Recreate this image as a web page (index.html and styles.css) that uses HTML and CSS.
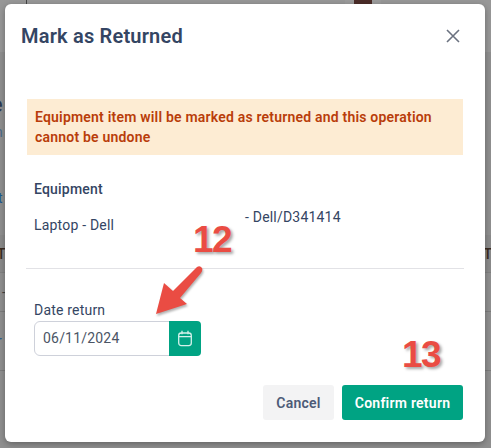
FILE: index.html
```html
<!DOCTYPE html>
<html lang="en">
<head>
    <meta charset="UTF-8">
    <meta name="viewport" content="width=device-width, initial-scale=1.0">
    <title>Mark as Returned</title>
    <link rel="stylesheet" href="styles.css">
</head>
<body>
    <!-- Page behind the dialog, only the edges show -->
    <div class="page">
        <div class="topbar">
            <span class="topbar-tick"></span>
            <span class="avatar"></span>
        </div>
        <div class="summary">
            <span class="summary-title">e</span>
            <span class="summary-sub">n</span>
            <span class="summary-link">t</span>
        </div>
        <div class="table-head">
            <span class="cell-left">T</span>
            <span class="cell-right">ST</span>
        </div>
        <div class="table-row row-one"><span class="cell-left dash">-</span></div>
        <div class="table-row row-two"><span class="cell-left blue">r</span></div>
    </div>

    <div class="modal">
        <div class="modal-header">
            <h1 class="modal-title">Mark as Returned</h1>
            <button class="close-btn" aria-label="Close">
                <svg width="14" height="14" viewBox="0 0 14 14"><path d="M1 1l12 12M13 1L1 13" stroke="#6b7280" stroke-width="1.6" fill="none"/></svg>
            </button>
        </div>

        <div class="alert">Equipment item will be marked as returned and this operation cannot be undone</div>

        <div class="equipment">
            <h2 class="equipment-label">Equipment</h2>
            <div class="equipment-row">
                <span class="equipment-name">Laptop - Dell</span>
                <span class="equipment-serial">- Dell/D341414</span>
            </div>
        </div>

        <hr class="divider">

        <label class="date-label">Date return</label>
        <div class="date-field">
            <span class="date-input">06/11/2024</span>
            <button class="date-btn" aria-label="Pick date">
                <svg width="16" height="17" viewBox="0 0 16 17" fill="none" stroke="#d3f1ea" stroke-width="1.3"><rect x="1.7" y="3" width="12.6" height="12.6" rx="2.5"/><path d="M1.7 6.6h12.6M5 .8v3.4M11 .8v3.4"/></svg>
            </button>
        </div>

        <div class="modal-footer">
            <button class="btn btn-cancel">Cancel</button>
            <button class="btn btn-confirm">Confirm return</button>
        </div>
    </div>

    <!-- Annotations drawn on top of the screenshot -->
    <span class="step step-12">12</span>
    <span class="step step-13">13</span>
    <svg class="arrow" width="60" height="60" viewBox="0 0 60 60"><path d="M1 54L9 23 18 31 42 7Q45 5 47 8 48 10 46 13L25 38 32 44Z" fill="#ea4c43"/></svg>
</body>
</html>
```

FILE: styles.css
```css
body {
    margin: 0;
    height: 448px;
    overflow: hidden;
    font-family: Roboto, sans-serif;
    background: #8f8f8f;
    color: #344563;
}

.page {
    font-size: 14px;
}

.topbar {
    height: 52px;
    background: #979797;
    position: relative;
}

.topbar-tick {
    position: absolute;
    left: 26px;
    top: 0;
    width: 1px;
    height: 4px;
    background: #444;
}

.avatar {
    position: absolute;
    left: 345px;
    top: 0;
    width: 36px;
    height: 4px;
    background: #9b9b9b;
}

.avatar::after {
    content: "";
    position: absolute;
    left: 9px;
    top: 0;
    width: 18px;
    height: 4px;
    background: #4a2c28;
}

.summary {
    height: 183px;
    position: relative;
}

.summary span {
    position: absolute;
}

.summary-title {
    left: -9px;
    top: 40px;
    font-size: 22px;
    color: #2a3850;
}

.summary-sub {
    left: -5px;
    top: 72px;
    color: #4a6a8a;
}

.summary-link {
    left: -2px;
    top: 138px;
    color: #1d5a92;
}

.table-head {
    height: 37px;
    border-bottom: 1px solid #808080;
    background: #8a8a8a;
    display: flex;
    justify-content: space-between;
    align-items: center;
    font-weight: 500;
    color: #3a2a20;
}

.cell-left {
    margin-left: -3px;
}

.cell-right {
    margin-right: -1px;
}

.table-row {
    border-bottom: 1px solid #7c7c7c;
    display: flex;
    align-items: center;
}

.row-one {
    height: 38px;
}

.row-two {
    height: 58px;
}

.dash {
    margin-left: 2px;
    color: #444;
}

.blue {
    color: #1d5a92;
    margin-left: -3px;
}

.modal {
    position: absolute;
    left: 5px;
    top: 4px;
    width: 480px;
    height: 438px;
    box-sizing: border-box;
    padding: 0 22px;
    background: white;
    border-radius: 6px;
    box-shadow: 0 2px 6px rgba(0, 0, 0, 0.3);
}

.modal-header {
    display: flex;
    justify-content: space-between;
    align-items: center;
    height: 64px;
    margin: 0 3px 0 -6px;
}

.modal-title {
    margin: 0;
    font-size: 20px;
    font-weight: 600;
    letter-spacing: 0.2px;
    color: #344563;
}

.close-btn {
    display: flex;
    padding: 0;
    border: none;
    background: none;
}

.alert {
    margin-top: 31px;
    padding: 8px;
    height: 40px;
    background: #fdecd3;
    font-size: 14px;
    line-height: 20px;
    font-weight: 600;
    letter-spacing: 0.2px;
    color: #b93d0a;
}

.equipment {
    padding: 0 7px;
}

.equipment-label {
    margin: 26px 0 0;
    font-size: 14px;
    line-height: 16px;
    font-weight: 500;
    letter-spacing: 0.2px;
}

.equipment-row {
    display: flex;
    align-items: flex-start;
    font-size: 14px;
    line-height: 16px;
    letter-spacing: 0.2px;
}

.equipment-name {
    width: 211px;
    margin-top: 20px;
}

.equipment-serial {
    margin-top: 12px;
}

.divider {
    margin: 35px -1px 0;
    border: none;
    height: 1px;
    background: #e2e2e6;
}

.date-label {
    display: block;
    margin: 33px 0 3px 7px;
    font-size: 14px;
    line-height: 16px;
    letter-spacing: 0.2px;
}

.date-field {
    display: flex;
    margin-left: 7px;
}

.date-input {
    box-sizing: border-box;
    width: 136px;
    height: 35px;
    padding-left: 8px;
    border: 1px solid #ced1da;
    border-radius: 6px 0 0 6px;
    font-size: 14px;
    line-height: 33px;
    letter-spacing: 0.2px;
    color: #4b5565;
}

.date-btn {
    display: flex;
    align-items: center;
    justify-content: center;
    width: 32px;
    height: 35px;
    margin-left: -1px;
    padding: 0;
    border: none;
    border-radius: 0 4px 4px 0;
    background: #00a383;
}

.modal-footer {
    display: flex;
    justify-content: flex-end;
    gap: 8px;
    margin-top: 29px;
}

.btn {
    height: 35px;
    border: none;
    border-radius: 3px;
    font-family: Roboto, sans-serif;
    font-size: 14px;
    font-weight: 600;
    letter-spacing: 0.25px;
    padding: 0;
}

.btn-cancel {
    width: 71px;
    background: #f3f3f4;
    color: #4d5b78;
}

.btn-confirm {
    width: 121px;
    background: #00a383;
    color: white;
}

.step {
    position: absolute;
    font-family: "Liberation Sans", sans-serif;
    font-size: 37px;
    font-weight: bold;
    line-height: 40px;
    letter-spacing: -1.5px;
    color: #ea4c43;
    text-shadow: 2px 2px 3px rgba(0, 0, 0, 0.35);
}

.step-12 {
    left: 193px;
    top: 220px;
}

.step-13 {
    left: 402px;
    top: 335px;
}

.arrow {
    position: absolute;
    left: 155px;
    top: 260px;
    filter: drop-shadow(1px 2px 1px rgba(0, 0, 0, 0.3));
}
```
